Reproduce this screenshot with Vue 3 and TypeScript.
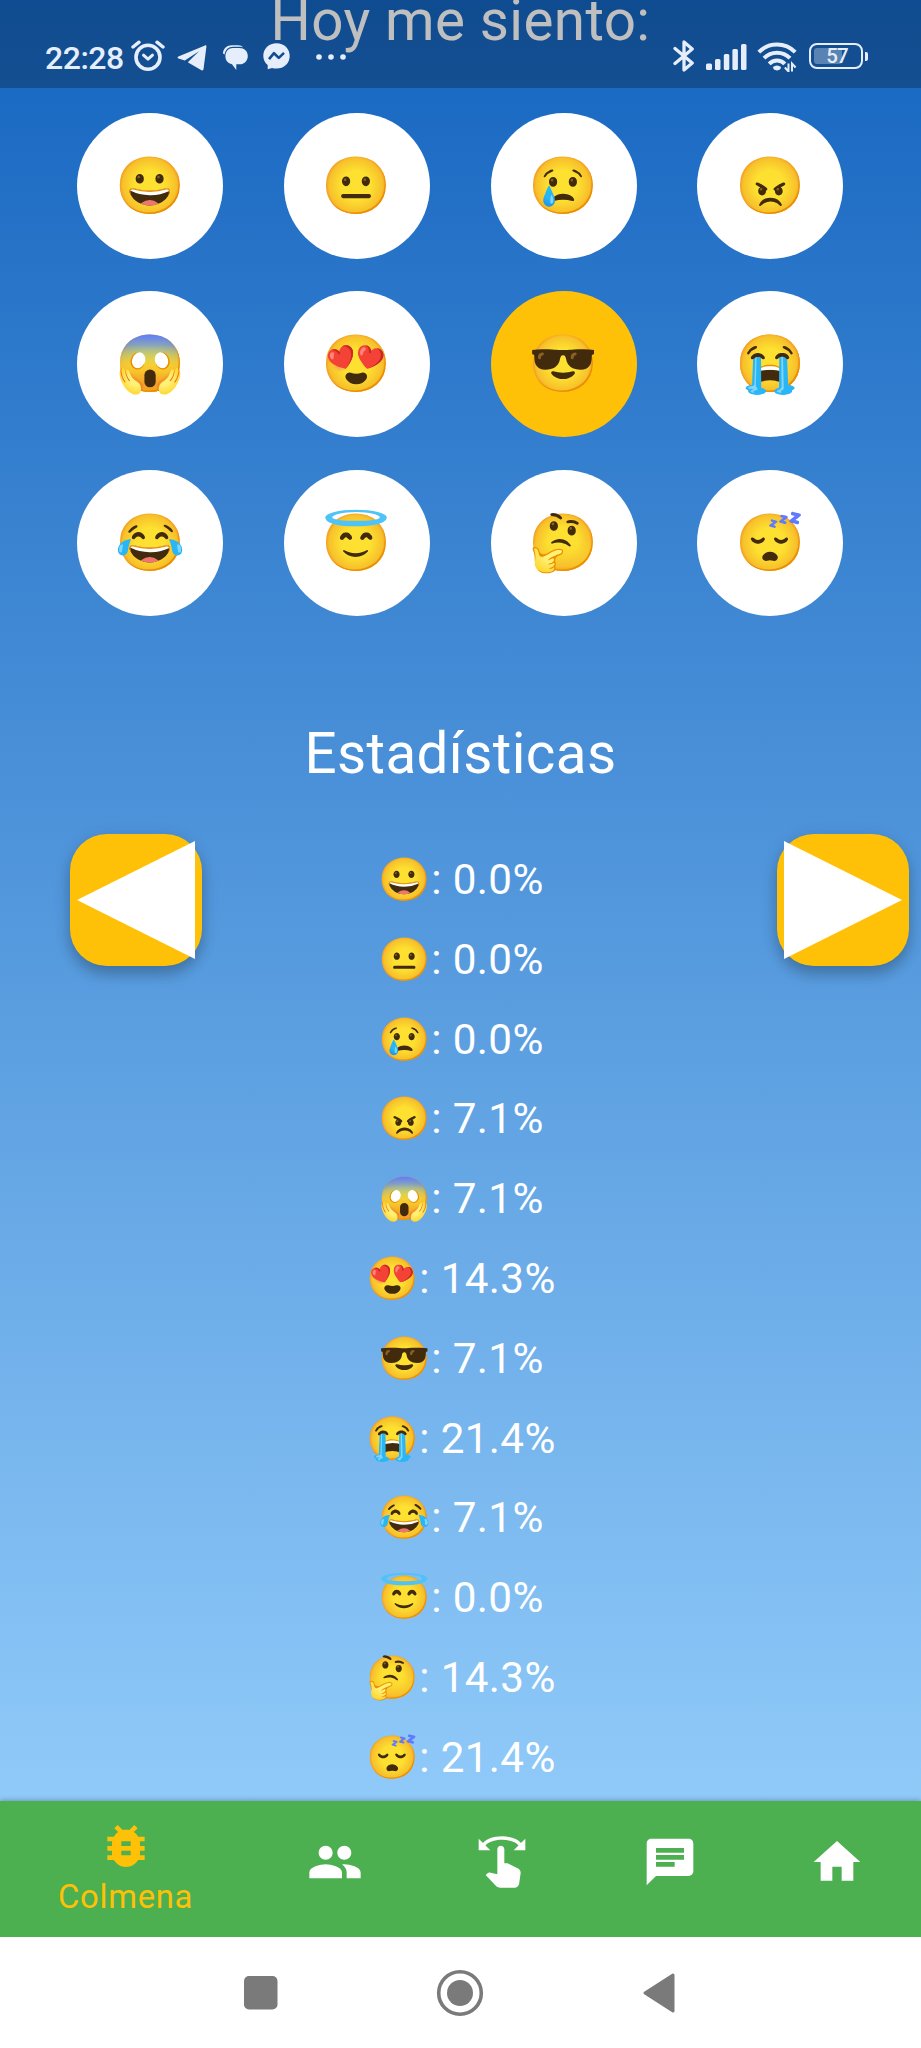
<script setup lang="ts">
import { ref } from 'vue'

interface Mood {
  emoji: string
  share: string
}

interface Tab {
  label: string
  path: string
}

const moods: Mood[] = [
  { emoji: '😀', share: '0.0%' },
  { emoji: '😐', share: '0.0%' },
  { emoji: '😢', share: '0.0%' },
  { emoji: '😠', share: '7.1%' },
  { emoji: '😱', share: '7.1%' },
  { emoji: '😍', share: '14.3%' },
  { emoji: '😎', share: '7.1%' },
  { emoji: '😭', share: '21.4%' },
  { emoji: '😂', share: '7.1%' },
  { emoji: '😇', share: '0.0%' },
  { emoji: '🤔', share: '14.3%' },
  { emoji: '😴', share: '21.4%' },
]

const tabs: Tab[] = [
  {
    label: 'Colmena',
    path: 'M20 8h-2.81c-.45-.78-1.07-1.45-1.82-1.96L17 4.41 15.59 3l-2.17 2.17C12.96 5.06 12.49 5 12 5c-.49 0-.96.06-1.41.17L8.41 3 7 4.41l1.62 1.63C7.88 6.55 7.26 7.22 6.81 8H4v2h2.09c-.05.33-.09.66-.09 1v1H4v2h2v1c0 .34.04.67.09 1H4v2h2.81c1.04 1.79 2.97 3 5.19 3s4.15-1.21 5.19-3H20v-2h-2.09c.05-.33.09-.66.09-1v-1h2v-2h-2v-1c0-.34-.04-.67-.09-1H20V8zm-6 8h-4v-2h4v2zm0-4h-4v-2h4v2z',
  },
  {
    label: '',
    path: 'M16 11c1.66 0 2.99-1.34 2.99-3S17.66 5 16 5c-1.66 0-3 1.34-3 3s1.34 3 3 3zm-8 0c1.66 0 2.99-1.34 2.99-3S9.66 5 8 5C6.34 5 5 6.34 5 8s1.34 3 3 3zm0 2c-2.33 0-7 1.17-7 3.5V19h14v-2.5c0-2.33-4.67-3.5-7-3.5zm8 0c-.29 0-.62.02-.97.05 1.16.84 1.97 1.97 1.97 3.45V19h6v-2.5c0-2.33-4.67-3.5-7-3.5z',
  },
  {
    label: '',
    path: 'M18.89 14.75l-4.09-2.04c-.28-.14-.58-.21-.89-.21H13v-6C13 5.67 12.33 5 11.5 5S10 5.67 10 6.5v10.74L6.75 16.5c-.33-.07-.68.03-.92.28L5 17.62l4.54 4.79c.38.38 1.14.59 1.67.59h6.16c1 0 1.84-.73 1.98-1.72l.63-4.46c.12-.85-.32-1.68-1.09-2.07zM20.13 3.87C18.69 2.17 15.6 1 12 1S5.31 2.17 3.87 3.87L2 2v5h5L4.93 4.93c1-1.29 3.7-2.43 7.07-2.43s6.07 1.14 7.07 2.43L17 7h5V2l-1.87 1.87z',
  },
  {
    label: '',
    path: 'M20 2H4c-1.1 0-1.99.9-1.99 2L2 22l4-4h14c1.1 0 2-.9 2-2V4c0-1.1-.9-2-2-2zM6 9h12v2H6V9zm8 5H6v-2h8v2zm4-6H6V6h12v2z',
  },
  { label: '', path: 'M10 20v-6h4v6h5v-8h3L12 3 2 12h3v8z' },
]

const selectedMood = ref('😎')
const activeTab = ref(0)
</script>

<template>
  <div class="screen">
    <div class="status-bar">
      <span class="clock">22:28</span>
      <svg class="alarm" viewBox="0 0 34 31" width="34" height="31" fill="none" stroke="currentColor">
        <circle cx="17" cy="17.2" r="12" stroke-width="3.6" />
        <path d="M2 7L8 2.2M32 7L26 2.2" stroke-width="3.4" stroke-linecap="round" />
        <path d="M12.5 15.2l4.5 4 4.5-4" stroke-width="3" stroke-linecap="round" stroke-linejoin="round" />
      </svg>
      <svg class="plane" viewBox="0 0 30 26" width="30" height="26" fill="currentColor">
        <path d="M28 .4L1.4 11.6c-1.2.5-1.1 1.6 0 2l6.4 2L22 6.3 11.3 16.8l-.2.6 13.4 7.8c1 .5 1.8.1 2-.9L29.4 1.8C29.6.6 29 0 28 .4z" />
      </svg>
      <svg class="bubble" viewBox="0 0 25 26" width="25" height="26" fill="currentColor">
        <path d="M0 8.5C0 3.5 4 .2 9 .2h6c2.5 0 4 .8 5 2-1.5-.4-3-.5-5-.5H10C5.5 1.7 2.3 4.600 1.600 9.5z" />
        <path d="M10 3h6.5c4.8 0 8.3 3.2 8.3 8s-3.5 8.3-8.3 8.300h-3.200V25L9 19.200C5 18.700 2.400 15.500 2.400 11.300 2.400 6.500 5.500 3 10 3z" />
      </svg>
      <svg class="messenger" viewBox="0 0 27 27" width="27" height="27">
        <path fill="currentColor" d="M13.5.3C6 .3.3 5.700.3 12.800c0 3.700 1.600 7 4.400 9.300v4.200l4.300-1.400c1.400.4 3 .6 4.500.6 7.500 0 13.200-5.400 13.200-12.600S21 .3 13.500.3z" />
        <path fill="none" stroke="#124d91" stroke-width="2.6" stroke-linejoin="round" d="M6 16.200l5-6 4.800 4.700 5.200-5" />
      </svg>
      <svg class="more" viewBox="0 0 30 6" width="30" height="6" fill="currentColor">
        <circle cx="3" cy="3" r="2.800" /><circle cx="15" cy="3" r="2.800" /><circle cx="27" cy="3" r="2.800" />
      </svg>
      <svg class="bluetooth" viewBox="0 0 22 32" width="22" height="32" fill="none" stroke="currentColor" stroke-width="3.3" stroke-linejoin="round" stroke-linecap="round">
        <path d="M2 8.500l17.200 14.500L11 30V2l8.200 7L2 23.500" />
      </svg>
      <svg class="signal" viewBox="0 0 41 27" width="41" height="27" fill="currentColor">
        <rect x="0" y="19.500" width="6" height="6.500" rx="1.500" />
        <rect x="9" y="15" width="5.500" height="11" rx="1.500" />
        <rect x="17.800" y="10" width="5.500" height="16" rx="1.500" />
        <rect x="26.400" y="5" width="5.500" height="21" rx="1.500" />
        <rect x="35" y="0" width="5.500" height="26" rx="1.500" />
      </svg>
      <svg class="wifi" viewBox="0 0 40 31" width="40" height="31" fill="none" stroke="currentColor" stroke-width="4">
        <path d="M1.800 11.200a25.500 25.500 0 0 1 36.400 0" />
        <path d="M7 17.200a18 18 0 0 1 26 0" />
        <path d="M12.200 22.800a10.800 10.800 0 0 1 15.600 0" />
        <path d="M16 26a6 6 0 0 1 8 0q0 3-4 3.500q-4-.5-4-3.500z" fill="currentColor" stroke="none" />
        <path d="M31.500 22.500v8l-3.600-4M35 30.500v-8l3.600 4" stroke-width="2" />
      </svg>
      <span class="battery"><span class="charge"></span><span class="level">57</span></span>
      <span class="battery-cap"></span>
    </div>

    <main class="content">
      <h1 class="title">Hoy me siento:</h1>
      <div class="mood-grid">
        <button
          v-for="mood in moods"
          :key="mood.emoji"
          class="mood"
          :class="{ selected: mood.emoji === selectedMood }"
          @click="selectedMood = mood.emoji"
        >
          {{ mood.emoji }}
        </button>
      </div>

      <h2 class="subtitle">Estadísticas</h2>
      <section class="stats">
        <button class="arrow">
          <svg viewBox="0 0 118 118" width="118" height="118"><path d="M0 59L118 0v118z" fill="#fff" /></svg>
        </button>
        <ul class="shares">
          <li v-for="mood in moods" :key="mood.emoji">{{ mood.emoji }}: {{ mood.share }}</li>
        </ul>
        <button class="arrow">
          <svg viewBox="0 0 118 118" width="118" height="118"><path d="M118 59L0 0v118z" fill="#fff" /></svg>
        </button>
      </section>
    </main>

    <nav class="tabs">
      <button
        v-for="(tab, index) in tabs"
        :key="index"
        class="tab"
        :class="{ active: index === activeTab }"
        @click="activeTab = index"
      >
        <svg viewBox="0 0 24 24" width="56" height="56" fill="currentColor"><path :d="tab.path" /></svg>
        <span v-if="tab.label" class="tab-label">{{ tab.label }}</span>
      </button>
    </nav>

    <div class="system-nav">
      <svg viewBox="0 0 34 34" width="34" height="34"><rect width="33.5" height="33.5" rx="5" fill="#7a7a7a" /></svg>
      <svg viewBox="0 0 48 48" width="48" height="48">
        <circle cx="24" cy="24" r="21.3" fill="none" stroke="#7a7a7a" stroke-width="3.6" />
        <circle cx="24" cy="24" r="13" fill="#7a7a7a" />
      </svg>
      <svg viewBox="0 0 32 40" width="32" height="40">
        <path d="M2 20L30 2v36z" fill="#7a7a7a" stroke="#7a7a7a" stroke-width="3" stroke-linejoin="round" />
      </svg>
    </div>
  </div>
</template>

<style>
body {
  margin: 0;
}
</style>

<style scoped>
.screen {
  position: relative;
  display: flex;
  flex-direction: column;
  width: 921px;
  height: 2048px;
  overflow: hidden;
  font-family: Roboto, "Noto Color Emoji", sans-serif;
  color: #fff;
}

button {
  padding: 0;
  border: 0;
  font: inherit;
  color: inherit;
}

svg {
  display: block;
  flex: none;
}

.status-bar {
  position: absolute;
  inset: 0 0 auto;
  z-index: 1;
  box-sizing: border-box;
  display: flex;
  align-items: flex-start;
  height: 88px;
  padding-left: 45px;
  background: rgba(0, 0, 0, 0.25);
  color: #e6eefb;
}

.clock {
  width: 86px;
  margin-top: 40px;
  font-size: 32px;
  line-height: 36px;
  font-weight: 500;
  letter-spacing: -0.5px;
}

.alarm {
  margin-top: 40px;
}

.plane {
  margin: 45px 0 0 12px;
}

.bubble {
  margin: 45px 0 0 16px;
}

.messenger {
  margin: 43px 0 0 15px;
}

.more {
  margin: 54px 0 0 26px;
}

.bluetooth {
  margin: 40px 0 0 327px;
}

.signal {
  margin: 44px 0 0 11px;
}

.wifi {
  margin: 41px 0 0 10px;
}

.battery {
  position: relative;
  box-sizing: border-box;
  width: 54px;
  height: 26px;
  margin: 43px 0 0 12px;
  border: 2.5px solid currentColor;
  border-radius: 8px;
  text-align: center;
}

.charge {
  position: absolute;
  inset: 3px 19px 3px 3px;
  border-radius: 3px;
  background: rgba(255, 255, 255, 0.3);
}

.level {
  position: relative;
  display: block;
  padding-left: 2px;
  font-size: 20.5px;
  line-height: 23px;
  font-weight: 500;
  letter-spacing: -1px;
}

.battery-cap {
  width: 3.5px;
  height: 9px;
  margin: 52px 0 0 1.5px;
  border-radius: 0 2px 2px 0;
  background: currentColor;
}

.content {
  display: flex;
  flex-direction: column;
  height: 1801px;
  background: linear-gradient(#1565c0, #90caf9);
}

.title,
.subtitle {
  margin: 0;
  font-size: 56.5px;
  line-height: 66px;
  font-weight: 400;
  letter-spacing: 0.4px;
  text-align: center;
}

.title {
  margin-top: -12px;
}

.mood-grid {
  display: grid;
  grid-template-columns: repeat(4, 146px);
  gap: 32.5px 60.8px;
  margin: 58.5px 0 0 77px;
}

.mood {
  width: 146px;
  height: 146px;
  border-radius: 50%;
  background: #fff;
  font-size: 56.3px;
  line-height: 146px;
  text-align: center;
}

.mood.selected {
  background: #ffc107;
}

.subtitle {
  margin-top: 105px;
}

.stats {
  display: flex;
  align-items: flex-start;
  justify-content: space-between;
  padding: 47.5px 12px 0 70px;
}

.arrow {
  display: grid;
  place-items: center;
  width: 132px;
  height: 132px;
  border-radius: 37px;
  background: #ffc107;
  box-shadow: 0 9px 14px rgba(0, 0, 0, 0.2), 0 3px 18px rgba(0, 0, 0, 0.1);
}

.shares {
  margin: 6px 57px 0 0;
  padding: 0;
  list-style: none;
  font-size: 42.2px;
  line-height: 79.8px;
  letter-spacing: 0.4px;
  text-align: center;
}

.tabs {
  display: flex;
  height: 136px;
  background: #4caf50;
  box-shadow: 0 -1px 5px rgba(0, 0, 0, 0.25);
}

.tab {
  display: flex;
  flex: 1;
  flex-direction: column;
  align-items: center;
  padding-top: 33px;
  background: none;
}

.tab.active {
  flex: 1.5;
  padding-top: 17px;
  color: #ffc107;
}

.tab-label {
  font-size: 32.8px;
  line-height: 46px;
  letter-spacing: 0.7px;
}

.system-nav {
  display: flex;
  flex: 1;
  align-items: center;
  justify-content: space-between;
  padding: 0 246px 0 243.5px;
  background: #fff;
}
</style>
